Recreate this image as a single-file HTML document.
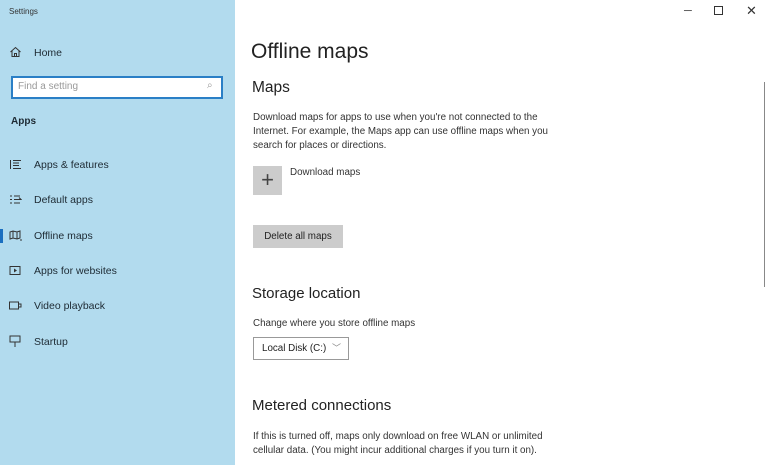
<!DOCTYPE html><html><head><style>
*{margin:0;padding:0;box-sizing:border-box}
body{width:768px;height:465px;overflow:hidden;font-family:"Liberation Sans",sans-serif;background:#fff;position:relative;color:#222}
.sb{position:absolute;left:0;top:0;width:235px;height:465px;background:#b2dbee}
.a{position:absolute;white-space:nowrap}
.nav{font-size:10.5px;color:#1d2a33}
.ic{position:absolute;left:9px;width:13px;height:11px}
.body{font-size:9.8px;color:#333;line-height:14px}
</style></head><body>
<div class="sb"></div>
<div class="a" style="left:9px;top:7px;font-size:8px;color:#333">Settings</div>
<svg class="ic" style="top:46px" viewBox="0 0 13 11"><path d="M1.5 6L6.5 1.5 11.5 6M3 5v5.5h7V5M5.5 10.5V7.5h2v3" fill="none" stroke="#333" stroke-width="1"/></svg>
<div class="a nav" style="left:34px;top:47px">Home</div>
<div class="a" style="left:11px;top:76px;width:212px;height:23px;border:2px solid #2a7fc6;background:#fff"></div>
<div class="a" style="left:18px;top:81px;font-size:10px;color:#999">Find a setting</div>
<div class="a" style="left:207px;top:80px;font-size:10px;color:#999">⌕</div>
<div class="a" style="left:11px;top:116px;font-size:10px;font-weight:bold;color:#1d2a33">Apps</div>
<svg class="ic" style="top:159px" viewBox="0 0 13 11"><path d="M1.5 1v9M4 1.5h8M4 4h6M4 6.5h6M4 9.5h8" stroke="#333" fill="none"/></svg>
<div class="a nav" style="left:34px;top:159px">Apps &amp; features</div>
<svg class="ic" style="top:194px" viewBox="0 0 13 11"><path d="M1 2h2M1 5.5h2M1 9h2M5 2h6M5 5.5h7l-2-2M5 9h6" stroke="#333" fill="none"/></svg>
<div class="a nav" style="left:34px;top:194px">Default apps</div>
<div class="a" style="left:0;top:229px;width:3px;height:14px;background:#1a6fc0"></div>
<svg class="ic" style="top:230px" viewBox="0 0 13 11"><path d="M1 2l3-1 4 1 3-1v7l-3 1-4-1-3 1zM4 1v7M8 2v7M11 10h2" stroke="#333" fill="none"/></svg>
<div class="a nav" style="left:34px;top:230px">Offline maps</div>
<svg class="ic" style="top:265px" viewBox="0 0 13 11"><rect x="1" y="1.5" width="10" height="8" fill="none" stroke="#333"/><path d="M5 3.5l3 2-3 2z" fill="#333"/></svg>
<div class="a nav" style="left:34px;top:265px">Apps for websites</div>
<svg class="ic" style="top:300px" viewBox="0 0 13 11"><rect x="0.5" y="2" width="9" height="7" fill="none" stroke="#333"/><path d="M10 4h2v3h-2" stroke="#333" fill="none"/></svg>
<div class="a nav" style="left:34px;top:300px">Video playback</div>
<svg class="ic" style="top:335px;height:13px" viewBox="0 0 13 13"><rect x="1" y="1" width="10" height="6" fill="none" stroke="#333"/><path d="M6 7v5" stroke="#333"/></svg>
<div class="a nav" style="left:34px;top:336px">Startup</div>

<div class="a" style="left:684px;top:5px;font-size:11px;color:#333">─</div>
<div class="a" style="left:714px;top:6px;width:9px;height:9px;border:1px solid #333"></div>
<div class="a" style="left:746px;top:3px;font-size:13px;color:#333">✕</div>
<div class="a" style="left:764px;top:82px;width:1px;height:205px;background:#888"></div>

<div class="a" style="left:251px;top:40px;font-size:21px;color:#222">Offline maps</div>
<div class="a" style="left:252px;top:79px;font-size:15.5px;color:#222">Maps</div>
<div class="a body" style="left:253px;top:111px">Download maps for apps to use when you're not connected to the<br>Internet. For example, the Maps app can use offline maps when you<br>search for places or directions.</div>
<div class="a" style="left:253px;top:166px;width:29px;height:29px;background:#ccc;color:#444;font-size:22px;line-height:27px;text-align:center;font-weight:200">+</div>
<div class="a body" style="left:290px;top:166px">Download maps</div>
<div class="a" style="left:253px;top:225px;width:90px;height:23px;background:#ccc;font-size:9.8px;line-height:23px;text-align:center;color:#222">Delete all maps</div>
<div class="a" style="left:252px;top:285px;font-size:15px;color:#222">Storage location</div>
<div class="a body" style="left:253px;top:317px">Change where you store offline maps</div>
<div class="a" style="left:253px;top:337px;width:96px;height:23px;border:1px solid #999;font-size:9.8px;line-height:21px;padding-left:8px;color:#222">Local Disk (C:)<span style="position:absolute;left:78px;top:0;color:#888;font-size:9px">﹀</span></div>
<div class="a" style="left:252px;top:397px;font-size:15px;color:#222">Metered connections</div>
<div class="a body" style="left:253px;top:430px">If this is turned off, maps only download on free WLAN or unlimited<br>cellular data. (You might incur additional charges if you turn it on).</div>
</body></html>
